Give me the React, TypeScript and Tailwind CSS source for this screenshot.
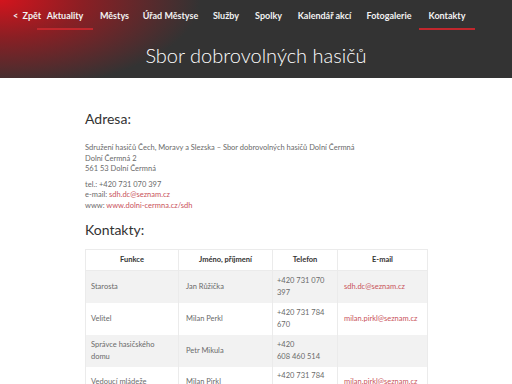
import React from "react";

const navItems: { label: string; w: string; active?: boolean }[] = [
  { label: "Aktuality", w: "w-[56px]", active: false },
  { label: "Městys", w: "w-[43px]" },
  { label: "Úřad Městyse", w: "w-[69px]" },
  { label: "Služby", w: "w-[42px]" },
  { label: "Spolky", w: "w-[43px]" },
  { label: "Kalendář akcí", w: "w-[69px]" },
  { label: "Fotogalerie", w: "w-[60px]" },
  { label: "Kontakty", w: "w-[56px]", active: true },
];

type Row = {
  f: React.ReactNode;
  n: string;
  t: React.ReactNode;
  e?: string;
  gray: boolean;
};

const rows: Row[] = [
  { f: "Starosta", n: "Jan Růžička", t: <>+420 731 070<br />397</>, e: "sdh.dc@seznam.cz", gray: true },
  { f: "Velitel", n: "Milan Perkl", t: <>+420 731 784<br />670</>, e: "milan.pirkl@seznam.cz", gray: false },
  { f: <>Správce hasičského<br />domu</>, n: "Petr Mikula", t: <>+420<br />608 460 514</>, gray: true },
  { f: "Vedoucí mládeže", n: "Milan Pirkl", t: <>+420 731 784<br />671</>, e: "milan.pirkl@seznam.cz", gray: false },
];

export default function App() {
  return (
    <div className="w-[512px] h-[384px] overflow-hidden bg-white font-['Lato','Noto_Sans',sans-serif]">
      <header className="h-[78px] bg-[#333333] bg-[radial-gradient(ellipse_200px_90px_at_0_0,#d3141d_0%,#8a1f24_42%,#333333_100%)] flex flex-col">
        <nav className="flex items-start h-[30px] pl-[13px] pt-[10px] text-white text-[9px] font-bold">
          <span className="w-[24px] whitespace-nowrap -mt-[1px] text-[#f2f2f2]">&lt;&nbsp; Zpět</span>
          {navItems.map((it) => (
            <div key={it.label} className={`${it.w} flex flex-col items-center`}>
              <span className="whitespace-nowrap leading-[12px] text-[#f2f2f2]">{it.label}</span>
              <span
                className={`mt-[6px] h-[2px] w-full ${it.label === "Aktuality" || it.active ? "bg-[#c1272d]" : "bg-transparent"}`}
              />
            </div>
          ))}
        </nav>
        <h1 className="text-center text-white text-[20px] leading-[24px] mt-[13px] font-light">
          Sbor dobrovolných hasičů
        </h1>
      </header>

      <main className="w-[342px] mx-auto pt-[32px] text-[#6a6a6a]">
        <h2 className="text-[14px] leading-[17px] text-[#333333]">Adresa:</h2>
        <p className="mt-[16px] text-[7.5px] leading-[10.5px]">
          Sdružení hasičů Čech, Moravy a Slezska – Sbor dobrovolných hasičů Dolní Čermná
          <br />
          Dolní Čermná 2
          <br />
          561 53 Dolní Čermná
        </p>
        <p className="mt-[5px] text-[7.5px] leading-[10.5px]">
          tel.: +420 731 070 397
          <br />
          e-mail: <span className="text-[#c9525a]">sdh.dc@seznam.cz</span>
          <br />
          www: <span className="text-[#c9525a]">www.dolni-cermna.cz/sdh</span>
        </p>

        <h2 className="mt-[10px] text-[14px] leading-[17px] text-[#333333]">Kontakty:</h2>

        <table className="mt-[11px] w-[342px] table-fixed border-collapse border border-[#ebebeb] text-[7.5px]">
          <colgroup>
            <col className="w-[93px]" />
            <col className="w-[94px]" />
            <col className="w-[65px]" />
            <col className="w-[90px]" />
          </colgroup>
          <thead>
            <tr className="h-[21px] bg-white text-[#333333] font-bold">
              <th className="border border-[#ebebeb] text-center">Funkce</th>
              <th className="border border-[#ebebeb] text-center">Jméno, příjmení</th>
              <th className="border border-[#ebebeb] text-center">Telefon</th>
              <th className="border border-[#ebebeb] text-center">E-mail</th>
            </tr>
          </thead>
          <tbody>
            {rows.map((r, i) => (
              <tr key={i} className={`h-[32px] ${r.gray ? "bg-[#f2f2f2]" : "bg-white"}`}>
                <td className="border-x border-[#ebebeb] pl-[5px] pr-[3px] leading-[12px] align-middle">{r.f}</td>
                <td className="border-x border-[#ebebeb] pl-[7px] leading-[12px] align-middle">{r.n}</td>
                <td className="border-x border-[#ebebeb] pl-[4px] leading-[12px] align-middle">{r.t}</td>
                <td className="border-x border-[#ebebeb] pl-[6px] leading-[12px] align-middle text-[#c9525a]">{r.e ?? ""}</td>
              </tr>
            ))}
          </tbody>
        </table>
      </main>
    </div>
  );
}
